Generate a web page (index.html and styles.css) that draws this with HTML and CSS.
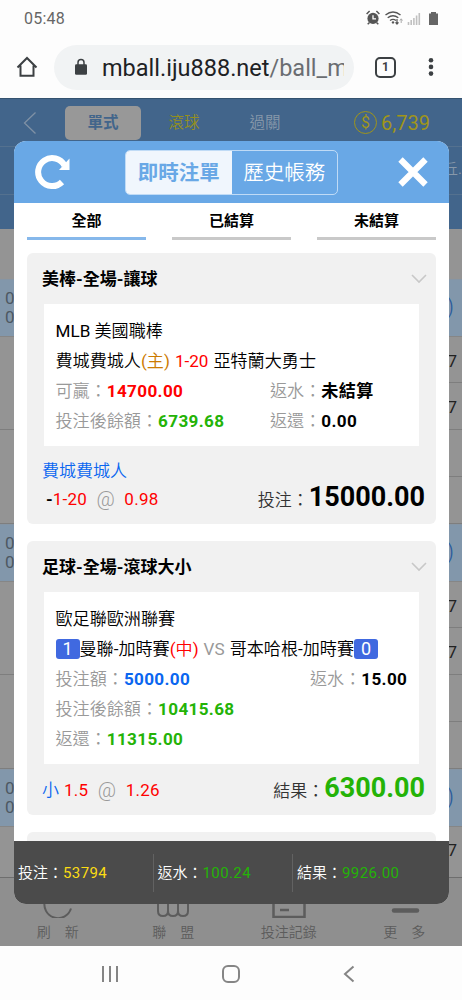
FILE: index.html
```html
<!DOCTYPE html>
<html lang="zh-Hant">
<head>
<meta charset="utf-8">
<title>即時注單</title>
<link rel="stylesheet" href="styles.css">
</head>
<body>
<div class="phone">
  <header class="status">
    <span class="clock">05:48</span>
    <svg class="status-icons" width="76" height="18" viewBox="0 0 76 18">
      <circle cx="8" cy="9.400" r="5.600" fill="#555"/>
      <path d="M1.600 5l3-3M14.400 5l-3-3M4.500 13.500l-1.800 1.800M11.500 13.500l1.800 1.800" fill="none" stroke="#555" stroke-width="1.500"/>
      <path d="M8 6.200v3.600h3" fill="none" stroke="#fff" stroke-width="1.300"/>
      <path d="M20.500 6q7.500-6 15 0M22.700 8.800q5.300-4.200 10.600 0M25 11.500q3-2.200 6 0" fill="none" stroke="#555" stroke-width="1.400"/>
      <circle cx="28" cy="13.400" r="1.200" fill="#555"/>
      <path d="M32 10v5M30.500 13.300l1.500 1.700 1.500-1.700" fill="none" stroke="#555" stroke-width="1.200"/>
      <path d="M36.200 14v-4M34.900 11.500l1.300-1.700 1.300 1.700" fill="none" stroke="#aaa" stroke-width="1"/>
      <path d="M43.500 16v-3M46.200 16v-5M48.900 16V9M51.600 16V6.500M54.300 16V4" stroke="#c0c0c0" stroke-width="1.600"/>
      <path d="M64 4.500h2V3h5v1.500h2V16h-9z" fill="#666"/>
    </svg>
  </header>
  <div class="browser">
    <svg class="home" width="22" height="22" viewBox="0 0 22 22"><path d="M1.500 11.500L11 2l9.500 9.500M4.500 9.500v10.300h13V9.500" fill="none" stroke="#3c4043" stroke-width="2"/></svg>
    <div class="address">
      <svg width="14" height="18" viewBox="0 0 14 18"><rect x="1" y="6.300" width="12" height="10.500" rx="1.300" fill="#3c4043"/><path d="M4 7V4.500a3 3 0 0 1 6 0V7" fill="none" stroke="#3c4043" stroke-width="1.500"/></svg>
      <span class="url">mball.iju888.net<i>/ball_m</i></span>
    </div>
    <span class="tabs-count">1</span>
    <svg class="dots" width="6" height="20" viewBox="0 0 6 20"><g fill="#3c4043"><circle cx="3" cy="3.200" r="2.300"/><circle cx="3" cy="9.900" r="2.300"/><circle cx="3" cy="16.600" r="2.300"/></g></svg>
  </div>

  <main class="page">
    <div class="topbar">
      <svg class="back" width="14" height="24" viewBox="0 0 14 24"><path d="M12.500 1.500L1.500 12l11 10.500" fill="none" stroke="#7f91a5" stroke-width="1.300"/></svg>
      <span class="mode mode-on">單式</span>
      <span class="mode yellow">滾球</span>
      <span class="mode">過關</span>
      <span class="coin">$</span>
      <span class="balance">6,739</span>
    </div>
    <div class="subbar"><span>丘.</span></div>
    <div class="subbar last"></div>
    <div class="league first"></div>
    <div class="stripe"><span>0<br>0</span><b>)</b></div>
    <div class="odds"><div></div><div></div><p>7</p><p>7</p><p></p><p></p></div>
    <div class="stripe"><span>0<br>0</span><b>)</b></div>
    <div class="odds"><div></div><div></div><p>7</p><p>7</p><p></p><p></p></div>
    <div class="stripe"><span>0<br>0</span><b>)</b></div>
    <div class="league"><p>7</p></div>
    <nav class="tabbar">
      <div><svg width="36" height="26" viewBox="0 0 36 26"><path d="M5 8.500a13.500 13.500 0 0 0 26 8" fill="none" stroke="#5c5c5c" stroke-width="2"/></svg><span>刷　新</span></div>
      <div><svg width="36" height="26" viewBox="0 0 36 26"><g fill="none" stroke="#5c5c5c" stroke-width="2"><path d="M3 6v13q0 5 5 5t5-5V6M13 19q0 5 5 5t5-5V6M23 19q0 5 5 5t5-5V6"/></g></svg><span>聯　盟</span></div>
      <div><svg width="36" height="26" viewBox="0 0 36 26"><path d="M2.500 4v21h31V4M9 18h9" fill="none" stroke="#5c5c5c" stroke-width="2.500"/></svg><span>投注記錄</span></div>
      <div><svg width="36" height="26" viewBox="0 0 36 26"><path d="M8 18.500h23" stroke="#5c5c5c" stroke-width="4.500" stroke-linecap="round"/></svg><span>更　多</span></div>
    </nav>

    <section class="modal">
      <div class="modal-head">
        <svg class="reload" width="36" height="36" viewBox="0 0 36 36"><path d="M27 28A14 14 0 1 1 29.500 11.500" fill="none" stroke="#fff" stroke-width="6"/><path d="M34.500 4.500v11.500H24z" fill="#fff"/></svg>
        <div class="switch"><span class="on">即時注單</span><span>歷史帳務</span></div>
        <svg class="close" width="30" height="30" viewBox="0 0 30 30"><path d="M2.500 2.500l25 25M27.500 2.500l-25 25" stroke="#fff" stroke-width="6.200"/></svg>
      </div>
      <div class="filters"><span class="on">全部</span><span>已結算</span><span>未結算</span></div>
      <div class="bets">
        <article class="bet">
          <h3>美棒-全場-讓球<svg width="16" height="10" viewBox="0 0 16 10"><path d="M1 1l7 7 7-7" fill="none" stroke="#c8c8c8" stroke-width="1.600"/></svg></h3>
          <div class="detail">
            <p><span>MLB 美國職棒</span></p>
            <p><span>費城費城人</span><span class="orange">(主)</span><span class="red sp">1-20</span><span class="sp">亞特蘭大勇士</span></p>
            <p><span class="grey">可贏：</span><b class="red">14700.00</b><span class="right"><span class="grey">返水：</span><b>未結算</b></span></p>
            <p><span class="grey">投注後餘額：</span><b class="green">6739.68</b><span class="right"><span class="grey">返還：</span><b>0.00</b></span></p>
          </div>
          <div class="result">
            <div class="pick"><p class="blue">費城費城人</p><p class="indent"><b>-</b><span class="red">1-20</span><span class="at">@</span><span class="red">0.98</span></p></div>
            <div class="total">投注：<b>15000.00</b></div>
          </div>
        </article>
        <article class="bet second">
          <h3>足球-全場-滾球大小<svg width="16" height="10" viewBox="0 0 16 10"><path d="M1 1l7 7 7-7" fill="none" stroke="#c8c8c8" stroke-width="1.600"/></svg></h3>
          <div class="detail">
            <p><span>歐足聯歐洲聯賽</span></p>
            <p><em>1</em><span>曼聯-加時賽</span><span class="red">(中)</span><span class="grey sp">VS</span><span class="sp">哥本哈根-加時賽</span><em>0</em></p>
            <p><span class="grey">投注額：</span><b class="blue">5000.00</b><span class="right far"><span class="grey">返水：</span><b>15.00</b></span></p>
            <p><span class="grey">投注後餘額：</span><b class="green">10415.68</b></p>
            <p><span class="grey">返還：</span><b class="green">11315.00</b></p>
          </div>
          <div class="result single">
            <div class="pick"><p><span class="blue">小</span><span class="red sp">1.5</span><span class="at">@</span><span class="red">1.26</span></p></div>
            <div class="total">結果：<b class="green">6300.00</b></div>
          </div>
        </article>
        <article class="bet"></article>
      </div>
      <footer class="sum">
        <div>投注：<span class="gold">53794</span></div>
        <div>返水：<span class="green">100.24</span></div>
        <div>結果：<span class="green">9926.00</span></div>
      </footer>
    </section>
  </main>

  <div class="sysnav">
    <svg width="18" height="18" viewBox="0 0 18 18"><path d="M2 1v16M9 1v16M16 1v16" stroke="#858585" stroke-width="2"/></svg>
    <svg width="20" height="20" viewBox="0 0 20 20"><rect x="2" y="2" width="16" height="16" rx="5" fill="none" stroke="#858585" stroke-width="2"/></svg>
    <svg width="12" height="18" viewBox="0 0 12 18"><path d="M10.500 1.500L2 9l8.500 7.500" fill="none" stroke="#858585" stroke-width="2"/></svg>
  </div>
</div>
</body>
</html>
```
FILE: styles.css
```css
* { box-sizing: border-box; margin: 0; padding: 0; }
body { font-family: Roboto, "Noto Sans CJK TC DemiLight", "Noto Sans CJK TC", sans-serif; background: #fff; color: #000; }
b, h3, .filters span, .mode-on, .switch .on { font-family: Roboto, "Noto Sans CJK TC", sans-serif; }
.phone { width: 462px; height: 1000px; overflow: hidden; display: flex; flex-direction: column; background: #fdfdfd; }
svg { display: block; flex: none; }

.status { height: 36px; display: flex; justify-content: space-between; padding: 9px 22px 0 24px; }
.clock { font-size: 16px; line-height: 20px; color: #666; letter-spacing: .2px; }
.status-icons { margin-right: -1px; }

.browser { height: 62px; display: flex; align-items: center; padding: 0 0 0 16px; }
.address { margin-left: 16px; width: 300px; height: 45px; border-radius: 23px; background: #f1f3f4; display: flex; align-items: center; padding-left: 20px; gap: 14px; }
.url { font-size: 23.5px; line-height: 30px; padding-top: 1px; color: #202124; width: 242px; overflow: hidden; white-space: nowrap; }
.url i { font-style: normal; color: #6a6d71; }
.tabs-count { margin-left: 21px; width: 21px; height: 21px; border: 2px solid #3c4043; border-radius: 5px; font-size: 12px; font-weight: 700; line-height: 17px; text-align: center; color: #3c4043; }
.dots { margin-left: 32px; }

.page { position: relative; height: 848px; background: #949494; display: flex; flex-direction: column; }
.topbar { height: 48px; flex: none; background: #42658b; border-top: 1px solid #35536f; display: flex; align-items: center; padding-left: 23px; color: #8798aa; }
.mode { width: 76px; height: 34px; line-height: 34px; text-align: center; font-size: 15.500px; margin-left: 5px; }
.mode-on { margin-left: 28px; background: #989898; color: #42658b; border-radius: 5px; font-weight: 700; }
.yellow { color: #948f1d; }
.coin { margin-left: 51px; width: 23px; height: 23px; border: 1.500px solid #a0951a; border-radius: 50%; font-size: 16px; line-height: 21px; text-align: center; color: #a0951a; }
.balance { font-size: 20px; margin-left: 4px; color: #a0951a; line-height: 22px; }
.subbar { height: 48px; flex: none; background: #42658b; border-top: 1px solid #54718f; padding: 10px 0 0 443px; font-size: 15px; color: #8798aa; white-space: nowrap; overflow: hidden; }
.subbar.last { height: 35px; }
.league { height: 50px; flex: none; text-align: right; padding: 13px 5px; font-size: 17px; color: #222; }
.stripe { height: 58px; flex: none; background: #8297ab; border-top: 1px solid #8695a4; border-bottom: 1px solid #868686; display: flex; justify-content: space-between; padding: 9px 8px 0 5px; font-size: 17px; line-height: 18.500px; color: #4d5762; }
.stripe b { font-weight: 300; font-size: 22px; line-height: 36px; color: #28599b; }
.odds { height: 187px; flex: none; display: grid; grid-template-columns: 50% 50%; grid-template-rows: 46px 47px 47px 47px; }
.odds div { grid-column: 1; border-bottom: 1px solid #7e7e7e; }
.odds div:nth-child(1) { grid-row: 1 / 3; }
.odds div:nth-child(2) { grid-row: 3 / 5; }
.odds p { grid-column: 2; border-bottom: 1px solid #7e7e7e; text-align: right; padding: 13px 5px; font-size: 17px; line-height: 22px; color: #222; }
.odds p:nth-child(3) { grid-row: 1; }
.odds p:nth-child(4) { grid-row: 2; }
.odds p:nth-child(5) { grid-row: 3; }
.odds p:nth-child(6) { grid-row: 4; }
.tabbar { flex: 1; border-top: 1px solid #6e6e6e; background: #8f8f8f; display: grid; grid-template-columns: repeat(4, 1fr); }
.tabbar div { display: flex; flex-direction: column; align-items: center; padding-top: 14px; }
.tabbar span { font-size: 14px; line-height: 20px; margin-top: 4px; color: #5c5c5c; white-space: nowrap; }

.modal { position: absolute; left: 14px; top: 43px; width: 435px; height: 763px; border-radius: 12px; background: #fff; overflow: hidden; display: flex; flex-direction: column; }
.modal-head { height: 62px; flex: none; background: #69a8e6; display: flex; align-items: center; padding: 0 21px; }
.switch { display: flex; width: 213px; height: 45px; margin-left: 54px; border: 1px solid #c0dbf6; border-radius: 5px; color: #fff; font-size: 20.500px; line-height: 43px; text-align: center; overflow: hidden; }
.switch span { flex: 1; padding-top: 1px; }
.switch .on { background: #f0f6fd; color: #69a8e6; font-weight: 700; line-height: 42px; }
.close { margin-left: auto; margin-right: 0; }
.filters { display: flex; justify-content: space-between; padding: 0 13px; height: 49px; flex: none; }
.filters span { width: 119px; height: 37px; border-bottom: 3px solid #c9c9c9; text-align: center; font-size: 15px; font-weight: 700; line-height: 36px; }
.filters .on { border-color: #86b8eb; }
.bets { flex: 1; min-height: 0; overflow: hidden; padding: 1px 13px 0; }
.bet { height: 271px; background: #f1f1f1; border-radius: 6px; margin-bottom: 17px; overflow: hidden; }
.bet.second { height: 274px; }
.bet h3 { height: 51px; display: flex; justify-content: space-between; align-items: center; padding: 0 9px 2px 15px; font-size: 17px; }
.bet h3 svg { margin-top: 2px; }
.detail { background: #fff; margin: 0 17px; padding: 12px 0 0 11.500px; height: 142px; font-size: 17.100px; }
.second .detail { height: 172px; }
.detail p { height: 30px; line-height: 30px; display: flex; align-items: center; white-space: nowrap; }
.detail b { letter-spacing: .35px; }
.right { margin-left: auto; width: 149px; }
.right.far { width: 109px; }
.sp { margin-left: 5px; }
.detail em { font-style: normal; background: #4069e0; color: #fff; width: 24px; height: 20px; line-height: 20px; border-radius: 3px; text-align: center; font-size: 18px; }
.red { color: #f00; }
.green { color: #24b307; }
.blue { color: #0a66f0; }
.orange { color: #cc7a00; }
.grey { color: #999; }
.gold { color: #fbdc13; }
.result { display: flex; justify-content: space-between; padding: 11px 11px 0 15px; font-size: 17px; }
.pick p { height: 28px; line-height: 28px; display: flex; white-space: nowrap; }
.indent { padding-left: 4px; }
.pick .red { letter-spacing: .25px; }
.at { margin: 0 9.500px; color: #999; font-size: 20px; font-weight: 300; }
.total { line-height: 34px; padding-top: 23px; color: #333; white-space: nowrap; }
.total b { font-size: 27px; color: #000; }
.total b.green { color: #24b307; }
.single .pick { padding-top: 1px; }
.single .total { padding-top: 0; margin-top: -4px; }
.sum { flex: none; height: 63px; background: #4b4b4b; display: flex; color: #fff; font-size: 15px; align-items: center; }
.sum div { width: 139.500px; padding-left: 4px; height: 38px; line-height: 38px; border-right: 1px solid #626262; white-space: nowrap; }
.sum span { letter-spacing: .4px; }
.sum div:last-child { border: 0; }

.sysnav { flex: 1; display: flex; align-items: center; gap: 102px; padding: 2px 0 0 101px; }
```
